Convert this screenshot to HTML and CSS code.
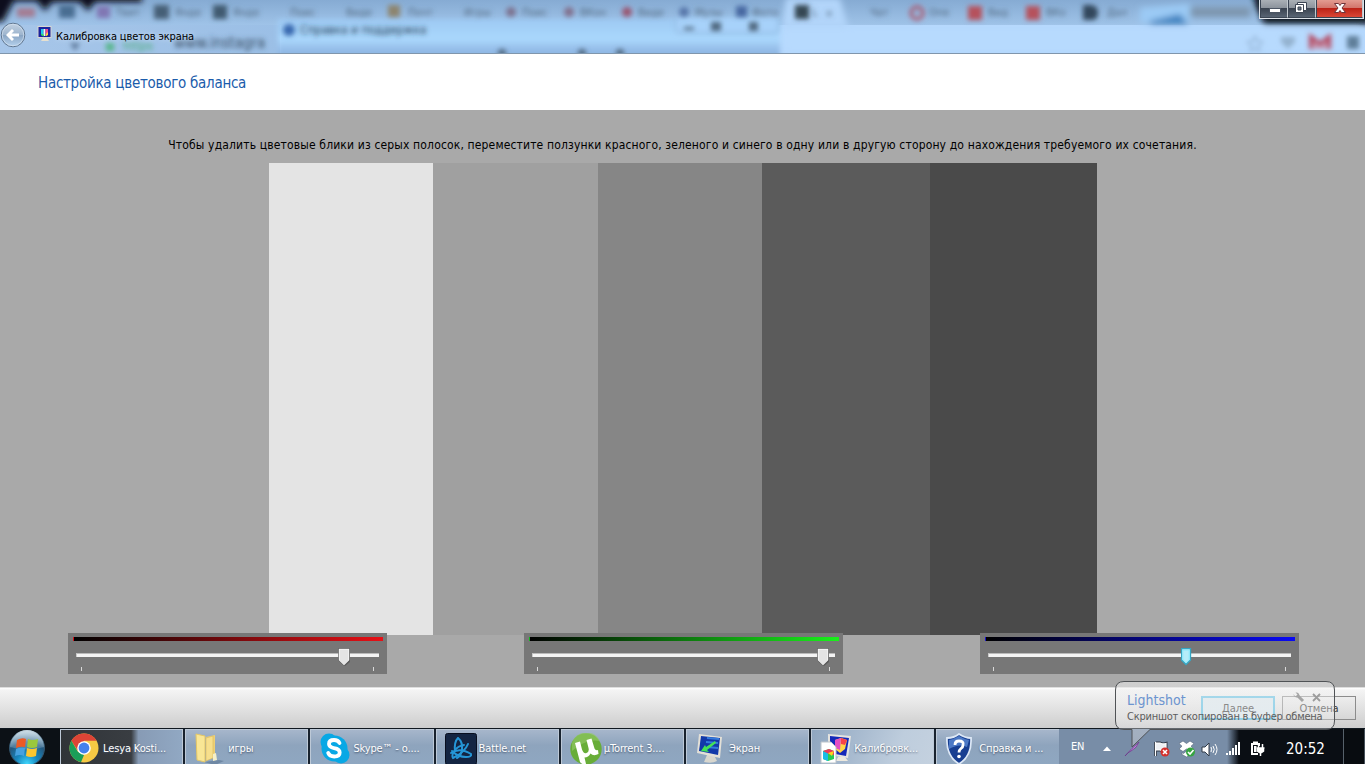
FILE: index.html
```html
<!DOCTYPE html>
<html lang="ru">
<head>
<meta charset="utf-8">
<title>Калибровка цветов экрана</title>
<link rel="stylesheet" href="styles.css">
</head>
<body>
<div class="screen">
  <header class="titlebar">
    <svg class="glass" width="1365" height="53" viewBox="0 0 1365 53" aria-hidden="true">
      <defs>
        <filter id="b3" x="-10%" y="-60%" width="120%" height="220%"><feGaussianBlur stdDeviation="3"/></filter>
        <filter id="b2" x="-10%" y="-60%" width="120%" height="220%"><feGaussianBlur stdDeviation="2.6"/></filter>
        <linearGradient id="tabs" x1="0" y1="0" x2="0" y2="1"><stop offset="0" stop-color="#86abd3"/><stop offset="1" stop-color="#9fc3e8"/></linearGradient>
        <linearGradient id="help" x1="0" y1="0" x2="0" y2="1"><stop offset="0" stop-color="#9dc9f3"/><stop offset=".45" stop-color="#aad8fd"/><stop offset=".6" stop-color="#9bc3ed"/><stop offset=".8" stop-color="#89b2e0"/></linearGradient>
        <linearGradient id="bl" x1="0" y1="0" x2="1" y2="0"><stop offset="0" stop-color="#a7c6e9"/><stop offset="1" stop-color="#9bbfe6"/></linearGradient>
      </defs>
      <rect width="1365" height="53" fill="#b5d8fd"/>
      <rect width="280" height="53" fill="url(#bl)"/>
      <rect width="1365" height="25" fill="url(#tabs)"/>
      <g filter="url(#b3)">
        <path d="M-10-10H142V2H95L88 11L80 2H52L45 11L37 1H14L3 22H-10Z" fill="#07111e"/>
        <path d="M1252-10H1375V24H1264L1256 8Z" fill="#0a1522"/>
        <rect x="784" y="30" width="575" height="20" fill="#b7dafe"/>
        <path d="M786-2H840L848 28H782Z" fill="#b2d5fa"/>
        <path d="M1140 8L1190 4V23H1140Z" fill="#9bcaf5"/><path d="M1150 21L1180 14L1188 24H1150Z" fill="#3e81bf"/>
        <rect x="1190" y="7" width="60" height="10" fill="#7d95ae"/>
      </g>
      <rect x="278" y="19" width="502" height="46" fill="url(#help)" filter="url(#b2)"/>
      <rect x="676" y="17" width="102" height="16" rx="3" fill="#a7d2fa" stroke="#84aacf" filter="url(#b2)"/>
      <g filter="url(#b2)">
        <rect x="17" y="8" width="18" height="9" fill="#a47b92"/><rect x="59" y="5" width="16" height="13" fill="#496d92"/><rect x="97" y="6" width="13" height="12" fill="#8076b3"/>
        <rect x="154" y="5" width="15" height="14" fill="#455e76"/><rect x="213" y="5" width="14" height="14" fill="#3f5a70"/><rect x="388" y="5" width="12" height="12" fill="#8d846d"/>
        <circle cx="511" cy="12" r="5" fill="#7b718e"/><circle cx="569" cy="12" r="5" fill="#81708c"/><circle cx="627" cy="12" r="5" fill="#99526e"/><circle cx="684" cy="12" r="5" fill="#5474a8"/>
        <rect x="736" y="6" width="11" height="11" fill="#4568a0"/><rect x="795" y="5" width="14" height="14" fill="#354653"/>
        <circle cx="917" cy="13" r="6" fill="none" stroke="#ad5367" stroke-width="3"/><rect x="968" y="6" width="14" height="14" fill="#b6515b"/><rect x="1026" y="6" width="14" height="14" fill="#b6515b"/><path d="M1083 5h7q8 0 8 8t-8 7h-7z" fill="#31465b"/>
        <circle cx="289" cy="30" r="6" fill="#3867ae"/>
        <rect x="106" y="43" width="8" height="8" fill="#57b68a"/><path d="M70 43l10 0-5 8z" fill="#5d7899"/>
        <path d="M1255 36l2 5 6 1-5 4 2 5-5-3-5 3 2-5-5-4 6-1z" fill="none" stroke="#7d9ab9"/><path d="M1281 37h14v5l-7 7-7-7z" fill="#93b1ce"/><path d="M1311 49V37l9 7 9-7v12" fill="#c69db8" stroke="#b5455d" stroke-width="4"/><rect x="1347" y="36" width="12" height="13" fill="#5f7e9a"/>
      </g>
      <g class="ghost" filter="url(#b2)">
        <text x="116" y="16">Твит</text><text x="175" y="16">Янде</text><text x="233" y="16">Янде</text><text x="290" y="16">Поис</text><text x="346" y="16">Виде</text><text x="408" y="16">Почт</text><text x="464" y="16">Игры</text><text x="522" y="16">Поис</text><text x="580" y="16">ВКон</text><text x="638" y="16">Виде</text><text x="695" y="16">Музы</text><text x="752" y="16">Фото</text><text x="812" y="16">L</text><text x="825" y="17">×</text><text x="870" y="16">Чат</text><text x="929" y="16">Опе</text><text x="988" y="16">Вид</text><text x="1046" y="16">ВКо</text><text x="1107" y="16">Дал</text>
        <text x="123" y="50" class="green">https</text><text x="174" y="48" class="url">www.instagra</text><text x="300" y="34" class="help">Справка и поддержка</text>
        <rect x="684" y="27" width="10" height="3"/><rect x="711" y="22" width="10" height="9"/><rect x="749" y="22" width="9" height="9"/>
        <circle cx="502" cy="53" r="4"/><circle cx="582" cy="53" r="4"/><circle cx="620" cy="53" r="4"/>
      </g>
    </svg>
    <div class="caption">
      <svg class="back" width="26" height="26" viewBox="0 0 26 26">
        <defs><linearGradient id="bk" x1="0" y1="0" x2="0" y2="1"><stop offset="0" stop-color="#c3d2e2"/><stop offset=".48" stop-color="#9eb5ce"/><stop offset=".52" stop-color="#8ba6c4"/><stop offset="1" stop-color="#b6d3ef"/></linearGradient></defs>
        <circle cx="13" cy="13" r="11.8" fill="url(#bk)" stroke="#60768f"/><circle cx="13" cy="13" r="10.8" fill="none" stroke="#d5e3f1" stroke-opacity=".7"/>
        <path d="M6 13l6-6 2 2-2.500 2.500H19v3h-7.500L14 17l-2 2z" fill="#fff"/>
      </svg>
      <svg class="app" width="16" height="16" viewBox="0 0 16 16">
        <rect x="1" y=".5" width="13" height="11" fill="#1b249e" stroke="#d8d7d2"/><path d="M4 3h2.500v7L4 9z" fill="#20c7ee"/><path d="M6.500 3h2v7h-2z" fill="#e9fff0"/><path d="M8.500 3H11v4l-2.500 3z" fill="#f04b91"/><path d="M4 7.500l3 1.500v1.500L4 9z" fill="#38da54"/><path d="M9 8l2-2v3l-2 1.300z" fill="#ffd83c"/><path d="M6 12h4l2 3H4z" fill="#e6e0cf"/>
      </svg>
      <span class="caption-text">Калибровка цветов экрана</span>
    </div>
    <div class="controls">
      <span class="ctl min"><svg width="28" height="17" viewBox="0 0 28 17"><rect x="8.500" y="8.500" width="11" height="4" fill="#fff" stroke="#4b5563"/></svg></span>
      <span class="ctl max"><svg width="26" height="17" viewBox="0 0 26 17"><path d="M8.500 2.500h9v8h-9z" fill="#fff" stroke="#3d4654"/><path d="M6.500 4.500h8v8h-8z" fill="#fff" stroke="#3d4654"/><path d="M9 7h3v3H9z" fill="#65707e" stroke="#3d4654"/></svg></span>
      <span class="ctl close"><svg width="46" height="17" viewBox="0 0 46 17"><path d="M17.500 3.500h4l1.500 2 1.500-2h4L25 8l3.500 4.500h-4l-1.500-2-1.500 2h-4L21 8z" fill="#fff" stroke="#70343a"/></svg></span>
    </div>
  </header>

  <section class="heading"><h1>Настройка цветового баланса</h1></section>

  <main class="work">
    <p class="hint"><span>Чтобы удалить цветовые блики из серых полосок, переместите ползунки красного, зеленого и синего в одну или в другую сторону до нахождения требуемого их сочетания.</span></p>
    <div class="stripes"><i class="s1"></i><i class="s2"></i><i class="s3"></i><i class="s4"></i><i class="s5"></i></div>
    <div class="sliders">
      <div class="slider red"><div class="ramp"></div><div class="track"><svg class="thumb" style="left:261px" width="13" height="19" viewBox="0 0 13 19"><path d="M2 2h10v12l-5 4-5-4z" fill="#4d4d4d" opacity=".6"/><path d="M1 1h10v11l-5 5-5-5z" fill="#e4e4e4" stroke="#fff"/><path d="M.5 .5h11v11.700L6 17.500.5 12.200z" fill="none" stroke="#666" stroke-width=".7"/></svg></div><div class="ticks"><i></i><i></i></div></div>
      <div class="slider lime"><div class="ramp"></div><div class="track"><svg class="thumb" style="left:284px" width="13" height="19" viewBox="0 0 13 19"><path d="M2 2h10v12l-5 4-5-4z" fill="#4d4d4d" opacity=".6"/><path d="M1 1h10v11l-5 5-5-5z" fill="#e4e4e4" stroke="#fff"/><path d="M.5 .5h11v11.700L6 17.500.5 12.200z" fill="none" stroke="#666" stroke-width=".7"/></svg></div><div class="ticks"><i></i><i></i></div></div>
      <div class="slider blue"><div class="ramp"></div><div class="track"><svg class="thumb" style="left:192px" width="13" height="19" viewBox="0 0 13 19"><path d="M.5 .7h9v11.300L5 16.500.5 12z" fill="#b5edf9" stroke="#34a6c4" stroke-width="1.300"/><path d="M1.800 2h6.400v9.500L5 14.700l-3.200-3.200z" fill="none" stroke="#8aeafd"/></svg></div><div class="ticks"><i></i><i></i></div></div>
    </div>
  </main>

  <footer class="actions">
    <button class="btn primary">Далее</button><button class="btn">Отмена</button>
  </footer>

  <nav class="taskbar">
    <div class="start">
      <svg width="38" height="36" viewBox="0 0 38 36">
        <defs><radialGradient id="orb" cx=".5" cy=".95" r=".9"><stop offset="0" stop-color="#3fd5fb"/><stop offset=".35" stop-color="#1787bf"/><stop offset=".7" stop-color="#24577d"/><stop offset="1" stop-color="#85a6bd"/></radialGradient><linearGradient id="gl" x1="0" y1="0" x2="0" y2="1"><stop offset="0" stop-color="#d9e6ee" stop-opacity=".9"/><stop offset="1" stop-color="#9abbd0" stop-opacity=".25"/></linearGradient></defs>
        <circle cx="19" cy="19" r="17.500" fill="url(#orb)" stroke="#33566e"/><path d="M2 18a17 17 0 0 1 34 0q-17 5-34 0z" fill="url(#gl)"/>
        <path d="M9 11q5-3 9-1l-1 8q-5-1-9 1z" fill="#ec5a24"/><path d="M20 10q4 2 10 0l-1 8q-5 2-10 0z" fill="#9ac83c"/><path d="M8 20q4-2 9-1l-1 8q-4-2-9 0z" fill="#46a1df"/><path d="M19 19q5 2 10 0l-1 8q-5 2-10 0z" fill="#fdc62f"/>
      </svg>
    </div>
    <div class="tasks">
      <div class="task first"><svg width="32" height="32" viewBox="0 0 32 32"><circle cx="15" cy="15" r="14.500" fill="#f6c944"/><path d="M2.400 7.700A14.500 14.500 0 0 1 27.600 7.700H15L9 18z" fill="#dc4436"/><path d="M2.400 7.700L8.700 18.600 15 22l-3 7.200A14.500 14.500 0 0 1 2.400 7.700z" fill="#1a9e59"/><circle cx="15" cy="15" r="6.800" fill="#fff"/><circle cx="15" cy="15" r="5.400" fill="#4381ec"/></svg><span>Lesya Kosti...</span></div>
      <div class="task"><svg width="32" height="32" viewBox="0 0 32 32"><path d="M10 29l15-2 5 1-9 4z" fill="#354f70" opacity=".35"/><path d="M2 1l9 2v26L3 27z" fill="#f9e695" stroke="#e4c766"/><path d="M12 4l9-2v21l-9 4z" fill="#eed075"/><path d="M12 5l7-2v22l-7 3z" fill="#f7df8c" stroke="#d8b95d" stroke-width=".6"/><path d="M19 21l3-1 1 7-4 1z" fill="#f5efc8"/></svg><span>игры</span></div>
      <div class="task"><svg width="32" height="32" viewBox="0 0 32 32"><circle cx="10" cy="9" r="8.500" fill="#08a8e5"/><circle cx="22" cy="22" r="8.500" fill="#08a8e5"/><circle cx="15.500" cy="15.500" r="13" fill="#08a8e5"/><path d="M20.500 10q-1.500-3-5.500-3-5 0-5 4 0 3 5.200 4.200 5.500 1 5.500 4.300 0 4-5.500 4-4.500 0-6-3.500" fill="none" stroke="#fff" stroke-width="3.800" stroke-linecap="round"/></svg><span>Skype™ - o....</span></div>
      <div class="task"><svg width="32" height="32" viewBox="0 0 32 32"><rect x=".5" y=".5" width="31" height="31" rx="2" fill="#142542" stroke="#080f20"/><g fill="none" stroke="#2596d6" stroke-width="2" stroke-linecap="round"><path d="M13 5q5 4 4 12-1 6-5 8M13 5q-4 4-3 13"/><path d="M6 20q9-6 20 1 1 3-5 3-8 0-14-6"/><path d="M23 11q-3 8-15 14-2-2 2-8 3-4 9-5"/></g></svg><span>Battle.net</span></div>
      <div class="task"><svg width="32" height="32" viewBox="0 0 32 32"><circle cx="16" cy="16" r="15.700" fill="#68ad38"/><path d="M2 10a15 15 0 0 1 28-2q-14-3-28 10z" fill="#95c968" opacity=".6"/><path d="M5 10l5-1.500 2 8q1.500 4.500 4.500 3.500 3-1 2-5l-2-8 5-1.500 3 10q1 2.500 3.500 1.500l.5 4q-5 2.500-8-.5-2 4-6 4l1.500 6.500q-4 1-6-2z" fill="#fff"/></svg><span>µTorrent 3....</span></div>
      <div class="task"><svg width="32" height="32" viewBox="0 0 32 32"><path d="M12 22h7l3 6q-5 3-13 1z" fill="#d7d6ce"/><path d="M4 1l23 3-2 21L2 20z" fill="#e3e0d7"/><path d="M6 3l19 2-2 17L4 18z" fill="#1239a9"/><path d="M12 5l12 1M11 9l12 1M12 14l11 1" stroke="#347bdc" stroke-width="2"/><path d="M20 8l-9 6-1-2-4 6 8 1-2-2 9-7z" fill="#43e257"/></svg><span>Экран</span></div>
      <div class="task active"><svg width="32" height="32" viewBox="0 0 32 32"><path d="M18 24h7l3 4h-12z" fill="#ece8de"/><path d="M8 1l23 2-3 22-20-3z" fill="#e5e4e0"/><path d="M10 3l19 2-3 18-16-3z" fill="#1428b9"/><path d="M15 7l6-2 6 2-2 9-5 4-5-4z" fill="#ffd448"/><path d="M15 7l6-2-1 12-5-2z" fill="#e34dc4"/><path d="M21 5l6 2-2 5-4-1z" fill="#f84248"/><path d="M1 9h10l5 5v16H1z" fill="#fff" stroke="#bcc4ca"/><path d="M3 18l6-2 5 2v8l-6 2-5-2z" fill="#29ca54"/><path d="M3 18l5 2v8l-5-2z" fill="#18bde5"/><path d="M3 18l6-2 5 2v4l-5-1z" fill="#ee385c"/><path d="M8 20l6-2-2 5z" fill="#fbd71d"/></svg><span>Калибровк...</span></div>
      <div class="task"><svg width="32" height="32" viewBox="0 0 32 32"><path d="M14 1q6 4 12 4 1 18-12 26Q1 23 2 5q7 0 12-4z" fill="#173e91" stroke="#dde8f6" stroke-width="1.800"/><path d="M14 3q5 3 10 4-1 4-2 7-8-4-18 2V7q5-1 10-4z" fill="#6391dc" opacity=".7"/><path d="M10 12q0-4 4-4 5 0 4 4 0 2-2 3.500-2 1.500-2 4" fill="none" stroke="#fff" stroke-width="2.800"/><circle cx="14" cy="23.500" r="1.800" fill="#fff"/></svg><span>Справка и ...</span></div>
    </div>
    <div class="tray">
      <span class="lang">EN</span>
      <svg class="icons" width="206" height="36" viewBox="0 0 206 36">
        <path d="M2 22l4-4.500 4 4.500z" fill="#fff"/>
        <path d="M24 27q7-8 14-14-2 6-8 9-3 1-6 5z" fill="#c88ae1" stroke="#6e3a8c" stroke-width=".8"/>
        <g><path d="M54.500 13v14M55 14h4q3 1.500 6 .500v7q-3 1-6-.500h-4" fill="#fff" stroke="#303947" stroke-width="3"/><path d="M54.500 13v14M55 14h4q3 1.500 6 .500v7q-3 1-6-.500h-4" fill="#edf0f4" stroke="#fff" stroke-width="1.200"/><circle cx="64" cy="23" r="4.500" fill="#d3302d"/><path d="M62 21l4 4m0-4l-4 4" stroke="#fff" stroke-width="1.600"/></g>
        <path d="M78 14.500l4-2.500 3.500 2.500 3.500-2.500 4 2.500-3 2.700 3 2.800-4 2.500-3.500-2.500-3.500 2.500-4-2.500 3-2.800zM81 23.500l1.500 1 3-2.500 3 2.500 1.500-1v2l-4.500 2.500-4.500-2.500z" fill="#fff" stroke="#52657a" stroke-width=".6"/><circle cx="89.500" cy="23" r="4.500" fill="#36a441"/><path d="M87 23l2 2 3.500-4" fill="none" stroke="#fff" stroke-width="1.600"/>
        <path d="M101 18h3l4-4v13l-4-4h-3z" fill="#fff" stroke="#303b48"/><path d="M110 18q1 2 0 5m2-6q2.500 3.500 0 7m2-9q4 5.500 0 11" fill="none" stroke="#fff" stroke-width="1"/>
        <path d="M125 24h2v2h-2zm3-2h2v4h-2zm3-3h2v7h-2zm3-3h2v10h-2zm3-3h2v13h-2z" fill="#fff"/>
        <path d="M150 14h2v-1.500h5V14h2v3h-2v-1h-5v8h5v2h-7z" fill="#fff"/><path d="M153 17h2.500v6H153z" fill="#fff"/><path d="M157.500 15v4m4-4v4m-6 0h8m-7 1h6v2l-2 1.500h-2l-2-1.500zm3 3v4" fill="#fff" stroke="#fff" stroke-width="1.500"/>
      </svg>
      <time class="clock">20:52</time>
      <span class="peek"></span>
    </div>
  </nav>

  <aside class="toast">
    <svg class="bubble" width="221" height="72" viewBox="0 0 221 72">
      <defs><linearGradient id="bub" x1="0" y1="0" x2="0" y2="1"><stop offset="0" stop-color="#f0f0f0" stop-opacity=".55"/><stop offset=".6" stop-color="#f2f2f2" stop-opacity=".35"/><stop offset="1" stop-color="#c8c9d0" stop-opacity=".5"/></linearGradient></defs>
      <path d="M9 1.500H211Q219.500 1.500 219.500 10V41Q219.500 49.500 211 49.500H35L17 67V49.500H9Q.5 49.500.5 41V10Q.5 1.500 9 1.500Z" fill="url(#bub)" stroke="#505356"/>
      <path d="M183 16l5 5" stroke="#a5a5a5" stroke-width="3"/><path d="M178 14l2.500 2.500 2-2-2-2q4-.5 4 4-4 3-6.500-2.500z" fill="#a5a5a5"/><path d="M198 14l7 7m0-7l-7 7" stroke="#9c9c9c" stroke-width="1.800"/>
    </svg>
    <div class="toast-title">Lightshot</div><div class="toast-text">Скриншот скопирован в буфер обмена</div>
  </aside>
</div>
</body>
</html>
```
FILE: styles.css
```css
* { box-sizing: border-box; }
body { margin: 0; overflow: hidden; font-family: "DejaVu Sans Condensed", "DejaVu Sans", sans-serif; font-stretch: condensed; font-size: 11px; color: #000; }
.screen { position: relative; width: 1365px; height: 764px; display: flex; flex-direction: column; overflow: hidden; background: #a9a9a9; }
svg { display: block; flex: none; }
.titlebar { position: relative; height: 54px; display: flex; justify-content: space-between; border-bottom: 1px solid #8096ac; }
.glass { position: absolute; inset: 0; }
.ghost { font-size: 11px; fill: #50677e; }
.ghost .green { fill: #48ac73; font-size: 13px; }
.ghost .url { fill: #34495d; font-size: 15px; }
.ghost .help { fill: #23394e; font-size: 12px; }
.caption { position: relative; display: flex; align-items: center; align-self: flex-start; margin-top: 22px; height: 26px; }
.app { margin: 0 3px 2px 11px; }
.caption-text { padding-top: 2px; letter-spacing: -0.13px; white-space: nowrap; text-shadow: 0 0 5px #d4e6fa; }
.controls { position: relative; display: flex; width: 105px; height: 19px; margin-right: 1px; border: 1px solid #dce1e7; border-top: 0; }
.ctl { height: 18px; border: 1px solid #3c4654; border-top: 0; border-right-color: #c1c8ce; background: linear-gradient(#aab0b6 0, #8d949d 45%, #3a4350 50%, #586473 100%); }
.min { width: 28px; } .max { width: 28px; } .close { width: 47px; background: linear-gradient(#e39c91 0, #d3766c 45%, #bd2317 50%, #da4737 100%); }
.heading { height: 56px; background: #fff; padding: 19px 38px 0; }
.heading h1 { margin: 0; font-size: 15px; line-height: 20px; font-weight: 400; color: #1b5cab; letter-spacing: -0.27px; white-space: nowrap; }
.work { height: 577px; padding-top: 27px; background: #a9a9a9; }
.hint { margin: 0; height: 26px; line-height: 17px; font-size: 12px; letter-spacing: .152px; text-align: center; white-space: nowrap; }
.stripes { display: grid; grid-template-columns: 164px 165px 164px 168px 167px; height: 472px; margin-left: 269px; width: 828px; }
.s1 { background: #e4e4e4; } .s2 { background: #a0a0a0; } .s3 { background: #868686; } .s4 { background: #5b5b5b; } .s5 { background: #4a4a4a; }
.sliders { position: relative; display: flex; gap: 137px; margin: -2px 0 0 68px; }
.slider { width: 319px; height: 41px; background: #777; padding: 4px 4px 0 5px; }
.ramp { height: 4px; border-left: 1px solid; }
.red .ramp { color: #d40c18; background: linear-gradient(90deg, #000, #e71016); }
.lime .ramp { color: #0fb91c; background: linear-gradient(90deg, #000, #19f01b); }
.blue .ramp { color: #1810d0; background: linear-gradient(90deg, #000, #0909f3); }
.track { position: relative; width: 303px; height: 4px; margin: 12px 0 0 3px; background: #f4f4f4; border-top: 1px solid #bbb; border-left: 1px solid #ccc; }
.thumb { position: absolute; top: -6px; }
.ticks { display: flex; justify-content: space-between; width: 293px; margin: 10px 0 0 8px; }
.ticks i { width: 1px; height: 4px; background: #d9d9d9; }
.actions { height: 41px; display: flex; justify-content: flex-end; gap: 7px; padding: 8px 9px 0 0; border-top: 1px solid #ddd; background: linear-gradient(#fff 0, #f4f4f4 5%, #dedede 60%, #cdcdcd 100%); }
.btn { width: 74px; height: 24px; padding: 0; font: inherit; letter-spacing: -.1px; color: #3c3c3c; background: transparent; border: 1px solid #8c8c8c; }
.primary { background: #dbe7ed; border: 2px solid #5fc0e4; }
.taskbar { display: flex; height: 36px; background: #0c1116; border-top: 1px solid #101820; color: #fff; }
.start { width: 60px; padding-left: 8px; }
.tasks { display: flex; gap: 2px; width: 999px; background: #18222e; }
.task { width: 123.200px; height: 35px; flex: none; display: flex; align-items: center; padding: 3px 0 0 8px; gap: 2px; overflow: hidden; letter-spacing: -.13px; white-space: nowrap; background: linear-gradient(#a6b6cb, #8ea4bd 45%, #8fa7c1); border: 1px solid #bdc9d7; border-bottom: 0; text-shadow: 0 1px 2px #40516a; }
.task.active { background: linear-gradient(110deg, #8fa6c0, #becddd 70%, #c4d1df); }
.task.first { background: linear-gradient(90deg, #303438 0, #393d42 58%, #879bb5 64%, #91a8c3 100%); }
.tray { flex: 1; display: flex; background: linear-gradient(90deg, #788da7 0, #788da7 168px, #0a0e14 180px); }
.lang { width: 41px; padding: 11px 0 0 12px; letter-spacing: -.3px; }
.icons { margin: 0 0 0 1px; }
.clock { padding-top: 11px; width: 56px; margin-left: -21px; font-size: 15px; line-height: 19px; }
.peek { width: 22px; margin-left: auto; border-left: 1px solid #56616a; border-right: 1px solid #47515a; background: #080c10; }
.toast { position: absolute; left: 1115px; top: 680px; width: 221px; height: 72px; padding: 11px 0 0 12px; white-space: nowrap; }
.bubble { position: absolute; left: 0; top: 0; }
.toast-title { position: relative; color: #6c94cf; font-size: 14px; line-height: 18px; }
.toast-text { position: relative; color: #5d5d5d; font-size: 11px; line-height: 16px; letter-spacing: -.24px; }
```
